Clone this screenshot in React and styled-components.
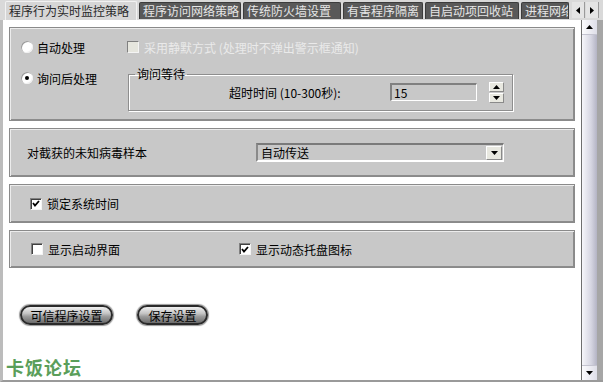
import styled, { createGlobalStyle } from 'styled-components';

const GlobalStyle = createGlobalStyle`
  html, body {
    margin: 0;
    padding: 0;
    background: #ffffff;
  }
  body {
    font-family: "Noto Sans CJK SC", "Liberation Sans", sans-serif;
    font-size: 12px;
    color: #000000;
  }
`;

const tabs = [
  { label: '程序行为实时监控策略', w: 132, active: true },
  { label: '程序访问网络策略', w: 102 },
  { label: '传统防火墙设置', w: 98 },
  { label: '有害程序隔离', w: 80 },
  { label: '自启动项回收站', w: 94 },
  { label: '进程网络监控', w: 48 },
];

const Arrow = ({ dir }) => {
  const pts = {
    up: '0,4 3.5,0 7,4',
    down: '0,0 3.5,4 7,0',
    left: '4,0 0,3.5 4,7',
    right: '0,0 4,3.5 0,7',
  }[dir];
  const horiz = dir === 'left' || dir === 'right';
  return (
    <svg width={horiz ? 4 : 7} height={horiz ? 7 : 4} viewBox={horiz ? '0 0 4 7' : '0 0 7 4'}>
      <polygon points={pts} fill="#000" />
    </svg>
  );
};

const CheckMark = () => (
  <svg width="8" height="7" viewBox="0 0 8 7">
    <polyline points="1,3 3,5.5 7,1" fill="none" stroke="#000" strokeWidth="1.8" />
  </svg>
);

export default function App() {
  return (
    <>
      <GlobalStyle />
      <Window>
        <TabBar>
          {tabs.map((t) => (
            <Tab key={t.label} w={t.w} $active={t.active}>
              {t.label}
            </Tab>
          ))}
          <TabArrows>
            <TabArrow>
              <Arrow dir="left" />
            </TabArrow>
            <TabArrow>
              <Arrow dir="right" />
            </TabArrow>
          </TabArrows>
        </TabBar>

        <Body>
          <Content>
            <Section h={94} $column $pad="11px 0 0 11px">
              <Row>
                <Option w={106}>
                  <Radio />
                  自动处理
                </Option>
                <Option $disabled>
                  <Check $disabled />
                  采用静默方式 (处理时不弹出警示框通知)
                </Option>
              </Row>
              <Row $top={12} $start>
                <Option w={107} $offset={3}>
                  <Radio $checked />
                  询问后处理
                </Option>
                <GroupBox>
                  <Legend>询问等待</Legend>
                  <GroupRow>
                    <FieldLabel>超时时间 (10-300秒):</FieldLabel>
                    <SpinInput>15</SpinInput>
                    <Spin>
                      <SpinBtn>
                        <Arrow dir="up" />
                      </SpinBtn>
                      <SpinBtn>
                        <Arrow dir="down" />
                      </SpinBtn>
                    </Spin>
                  </GroupRow>
                </GroupBox>
              </Row>
            </Section>

            <Section h={49} $pad="0 0 0 17px">
              <FieldLabel w={229}>对截获的未知病毒样本</FieldLabel>
              <Select>
                <span>自动传送</span>
                <DropBtn>
                  <Arrow dir="down" />
                </DropBtn>
              </Select>
            </Section>

            <Section h={39} $pad="0 0 0 20px">
              <Option>
                <Check $checked>
                  <CheckMark />
                </Check>
                锁定系统时间
              </Option>
            </Section>

            <Section h={38} $pad="0 0 0 21px">
              <Option w={208}>
                <Check />
                显示启动界面
              </Option>
              <Option>
                <Check $checked>
                  <CheckMark />
                </Check>
                显示动态托盘图标
              </Option>
            </Section>

            <ButtonRow>
              <PillButton w={93}>可信程序设置</PillButton>
              <PillButton w={71}>保存设置</PillButton>
            </ButtonRow>

            <Watermark>卡饭论坛</Watermark>
          </Content>

          <ScrollBar>
            <ScrollBtn>
              <Arrow dir="up" />
            </ScrollBtn>
            <ScrollTrack />
            <ScrollBtn $bottom>
              <Arrow dir="down" />
            </ScrollBtn>
          </ScrollBar>
          <RightEdge />
        </Body>
      </Window>
    </>
  );
}

const Window = styled.div`
  width: 603px;
  height: 382px;
  display: flex;
  flex-direction: column;
  background: #d9d9d9;
  overflow: hidden;
`;

const TabBar = styled.div`
  height: 20px;
  flex-shrink: 0;
  display: flex;
  align-items: flex-end;
  padding-left: 5px;
  gap: 2px;
  box-sizing: border-box;
`;

const Tab = styled.div`
  width: ${(p) => p.w}px;
  height: ${(p) => (p.$active ? 19 : 17)}px;
  margin-bottom: ${(p) => (p.$active ? 0 : 1)}px;
  box-sizing: border-box;
  padding-left: 3px;
  white-space: nowrap;
  overflow: hidden;
  font-size: 12px;
  line-height: ${(p) => (p.$active ? 18 : 16)}px;
  border-radius: 2px 2px 0 0;
  background: ${(p) => (p.$active ? '#d6d6d6' : '#595959')};
  color: ${(p) => (p.$active ? '#2a2a2a' : '#e6e6e6')};
  border: 1px solid ${(p) => (p.$active ? '#f2f2f2' : '#3c3c3c')};
  border-bottom: none;
`;

const TabArrows = styled.div`
  display: flex;
  gap: 1px;
  margin-left: 1px;
  margin-bottom: 2px;
`;

const TabArrow = styled.div`
  width: 13px;
  height: 16px;
  display: flex;
  align-items: center;
  justify-content: center;
  background: #e4e4e4;
  border-right: 1px solid #9a9a9a;
  box-sizing: border-box;
`;

const Body = styled.div`
  flex: 1;
  min-height: 0;
  display: flex;
  background: #ffffff;
  border-left: 3px solid #bcbcbc;
  border-bottom: 2px solid #9a9a9a;
`;

const Content = styled.div`
  flex: 1;
  display: flex;
  flex-direction: column;
  gap: 7px;
  padding: 7px 6px 0 6px;
`;

const Section = styled.div`
  height: ${(p) => p.h}px;
  box-sizing: border-box;
  flex-shrink: 0;
  display: flex;
  flex-direction: ${(p) => (p.$column ? 'column' : 'row')};
  align-items: ${(p) => (p.$column ? 'stretch' : 'center')};
  padding: ${(p) => p.$pad};
  background: #c8c8c8;
  border: 1px solid #8a8a8a;
  box-shadow: inset 1px 1px 0 #ececec, inset -1px -1px 0 #8c8c8c;
`;

const Row = styled.div`
  display: flex;
  align-items: ${(p) => (p.$start ? 'flex-start' : 'center')};
  margin-top: ${(p) => p.$top || 0}px;
  height: ${(p) => (p.$start ? 'auto' : '16px')};
`;

const Option = styled.div`
  display: flex;
  align-items: center;
  gap: 5px;
  height: 16px;
  flex-shrink: 0;
  width: ${(p) => (p.w ? `${p.w}px` : 'auto')};
  margin-top: ${(p) => p.$offset || 0}px;
  white-space: nowrap;
  color: ${(p) => (p.$disabled ? '#eaeaea' : '#000')};
`;

const Radio = styled.span`
  width: 12px;
  height: 12px;
  border-radius: 50%;
  background: #ffffff;
  box-shadow: inset 1px 1px 0 #9a9a9a, inset -1px -1px 0 #f0f0f0;
  display: flex;
  align-items: center;
  justify-content: center;
  flex-shrink: 0;
  margin-right: -1px;

  &::after {
    content: '';
    width: 4px;
    height: 4px;
    border-radius: 50%;
    background: ${(p) => (p.$checked ? '#000' : 'transparent')};
  }
`;

const Check = styled.span`
  width: 12px;
  height: 12px;
  box-sizing: border-box;
  flex-shrink: 0;
  display: flex;
  align-items: center;
  justify-content: center;
  background: ${(p) => (p.$disabled ? '#e6e6de' : '#ffffff')};
  border-top: 1px solid #808080;
  border-left: 1px solid #808080;
  border-right: 1px solid #f4f4f4;
  border-bottom: 1px solid #f4f4f4;
  box-shadow: ${(p) => (p.$disabled ? 'none' : 'inset 1px 1px 0 #404040')};
`;

const GroupBox = styled.fieldset`
  margin: 0;
  padding: 0;
  width: 385px;
  height: 44px;
  box-sizing: border-box;
  border: 1px solid #8e8e8e;
  box-shadow: inset 1px 1px 0 #ffffff, 1px 1px 0 #ffffff;
  min-width: 0;
`;

const Legend = styled.legend`
  margin-left: 6px;
  padding: 0 2px;
  font-size: 12px;
  line-height: 14px;
`;

const GroupRow = styled.div`
  display: flex;
  align-items: center;
  height: 22px;
  padding-left: 100px;
`;

const FieldLabel = styled.span`
  width: ${(p) => p.w || 161}px;
  flex-shrink: 0;
  white-space: nowrap;
`;

const SpinInput = styled.div`
  width: 87px;
  height: 18px;
  box-sizing: border-box;
  padding-left: 2px;
  line-height: 15px;
  background: #c8c8c8;
  border-top: 2px solid #808080;
  border-left: 2px solid #808080;
  border-right: 1px solid #ffffff;
  border-bottom: 1px solid #ffffff;
`;

const Spin = styled.div`
  display: flex;
  flex-direction: column;
  gap: 1px;
  margin-left: 12px;
`;

const SpinBtn = styled.div`
  width: 15px;
  height: 10px;
  box-sizing: border-box;
  display: flex;
  align-items: center;
  justify-content: center;
  background: #e8e8e0;
  border-top: 1px solid #ffffff;
  border-left: 1px solid #ffffff;
  border-right: 1px solid #8a8a8a;
  border-bottom: 1px solid #8a8a8a;
`;

const Select = styled.div`
  width: 248px;
  height: 19px;
  box-sizing: border-box;
  display: flex;
  align-items: center;
  justify-content: space-between;
  padding: 0 1px 0 3px;
  background: #c8c8c8;
  border-top: 2px solid #7a7a7a;
  border-left: 2px solid #8a8a8a;
  border-right: 1px solid #ffffff;
  border-bottom: 2px solid #ffffff;
`;

const DropBtn = styled.div`
  width: 16px;
  height: 14px;
  box-sizing: border-box;
  display: flex;
  align-items: center;
  justify-content: center;
  background: #e8e8e0;
  border-top: 1px solid #ffffff;
  border-left: 1px solid #ffffff;
  border-right: 1px solid #8a8a8a;
  border-bottom: 1px solid #8a8a8a;
`;

const ButtonRow = styled.div`
  display: flex;
  gap: 24px;
  padding-left: 11px;
  margin-top: 30px;
`;

const PillButton = styled.div`
  width: ${(p) => p.w}px;
  height: 20px;
  box-sizing: border-box;
  display: flex;
  align-items: center;
  justify-content: center;
  border-radius: 10px;
  border: 2px solid #2a2a2a;
  box-shadow: 0 0 1px 1px #9a9a9a;
  background: linear-gradient(#f0f0f0 0%, #c4c4c4 40%, #9a9a9a 60%, #6c6c6c 100%);
  color: #000;
  font-size: 12px;
  white-space: nowrap;
`;

const Watermark = styled.div`
  margin-top: 24px;
  margin-left: -3px;
  font-size: 18px;
  line-height: 22px;
  font-weight: bold;
  letter-spacing: 1px;
  color: #5a9e5a;
`;

const ScrollBar = styled.div`
  width: 15px;
  flex-shrink: 0;
  display: flex;
  flex-direction: column;
  border-left: 1px solid #6e6e6e;
  background: linear-gradient(to right, #f6f6fa, #d6d6e2 60%, #b4b4c4);
`;

const ScrollBtn = styled.div`
  height: 14px;
  display: flex;
  align-items: center;
  justify-content: center;
  background: linear-gradient(to right, #fcfcfe, #dedee8);
  border-bottom: ${(p) => (p.$bottom ? 'none' : '1px solid #c4c4d0')};
  border-top: ${(p) => (p.$bottom ? '1px solid #c4c4d0' : 'none')};
`;

const ScrollTrack = styled.div`
  flex: 1;
`;

const RightEdge = styled.div`
  width: 6px;
  flex-shrink: 0;
  background: #a6a6a6;
`;
